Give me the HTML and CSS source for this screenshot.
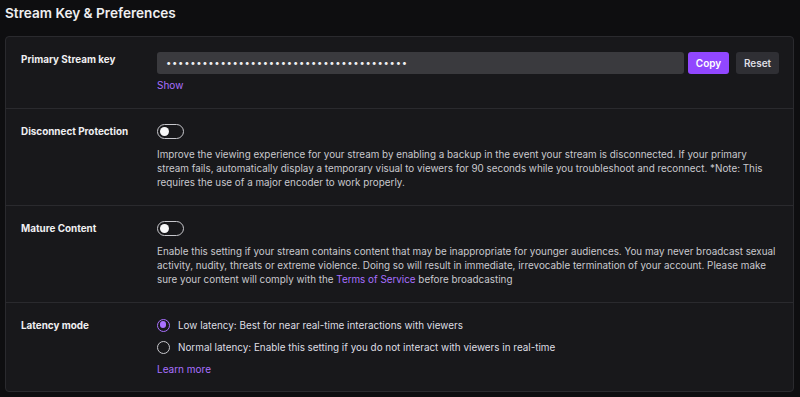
FILE: index.html
```html
<!DOCTYPE html>
<html>
<head>
<meta charset="utf-8">
<link rel="stylesheet" href="styles.css">
</head>
<body>
<div class="page">
  <h1 class="title">Stream Key &amp; Preferences</h1>
  <div class="card">
    <div class="row row-key">
      <div class="label">Primary Stream key</div>
      <div class="content">
        <div class="key-line">
          <div class="key-input">••••••••••••••••••••••••••••••••••••••••</div>
          <button class="btn btn-primary">Copy</button>
          <button class="btn btn-secondary">Reset</button>
        </div>
        <a class="link show">Show</a>
      </div>
    </div>
    <div class="row">
      <div class="label">Disconnect Protection</div>
      <div class="content">
        <div class="toggle"><span class="knob"></span></div>
        <p class="desc">Improve the viewing experience for your stream by enabling a backup in the event your stream is disconnected. If your primary<br>stream fails, automatically display a temporary visual to viewers for 90 seconds while you troubleshoot and reconnect. *Note: This<br>requires the use of a major encoder to work properly.</p>
      </div>
    </div>
    <div class="row">
      <div class="label">Mature Content</div>
      <div class="content">
        <div class="toggle"><span class="knob"></span></div>
        <p class="desc">Enable this setting if your stream contains content that may be inappropriate for younger audiences. You may never broadcast sexual<br>activity, nudity, threats or extreme violence. Doing so will result in immediate, irrevocable termination of your account. Please make<br>sure your content will comply with the <span class="link">Terms of Service</span> before broadcasting</p>
      </div>
    </div>
    <div class="row row-latency">
      <div class="label">Latency mode</div>
      <div class="content">
        <div class="radio-row"><span class="radio checked"></span><span class="radio-text">Low latency: Best for near real-time interactions with viewers</span></div>
        <div class="radio-row"><span class="radio"></span><span class="radio-text">Normal latency: Enable this setting if you do not interact with viewers in real-time</span></div>
        <a class="link learn">Learn more</a>
      </div>
    </div>
  </div>
</div>
</body>
</html>
```

FILE: styles.css
```css
* { box-sizing: border-box; }
html, body { margin: 0; padding: 0; }
body {
  background: #0e0e10;
  font-family: Inter, "Noto Sans", sans-serif;
  color: #dedee3;
  width: 800px;
  height: 397px;
  overflow: hidden;
}
.page {
  padding: 3px 6px 0 5px;
}
.title {
  margin: 0 0 13px 0;
  font-size: 13.6px;
  font-weight: 600;
  line-height: 20px;
  color: #efeff1;
}
.card {
  background: #18181b;
  border: 1px solid #2a2a2e;
  border-radius: 4px;
}
.row {
  display: flex;
  padding: 15px 4px 16px 15px;
  border-top: 1px solid #2a2a2e;
}
.row:first-child { border-top: none; }
.row-key { padding-top: 15px; padding-bottom: 16px; padding-right: 12px; }
.row-latency { padding-top: 15px; padding-bottom: 15px; }
.label {
  width: 136px;
  flex: none;
  font-size: 9.9px;
  font-weight: 700;
  color: #efeff1;
  line-height: 14px;
}
.content {
  flex: 1;
  min-width: 0;
}
.key-line {
  display: flex;
  align-items: center;
  gap: 4px;
  padding-right: 2px;
}
.key-input {
  flex: 1;
  height: 22px;
  background: #3a3a3e;
  border-radius: 3px;
  padding: 0 9px;
  font-size: 9.5px;
  letter-spacing: 0.7px;
  line-height: 22px;
  color: #efeff1;
  white-space: nowrap;
  overflow: hidden;
}
.btn {
  height: 22px;
  border: none;
  border-radius: 3px;
  font-family: inherit;
  font-size: 10px;
  font-weight: 600;
  padding: 0;
  cursor: pointer;
}
.btn-primary {
  background: #9147ff;
  color: #ffffff;
  width: 41px;
  margin-right: 3px;
}
.btn-secondary {
  background: #2f2f34;
  color: #dedee3;
  width: 43px;
}
.link {
  color: #a970ff;
  text-decoration: none;
}
.show {
  display: block;
  font-size: 10px;
  line-height: 14px;
  margin-top: 4px;
}
.toggle {
  width: 27px;
  height: 15px;
  border: 1.5px solid #c8c8cd;
  border-radius: 8px;
  position: relative;
  margin-bottom: 8px;
}
.knob {
  position: absolute;
  left: 1.5px;
  top: 1.5px;
  width: 9px;
  height: 9px;
  border-radius: 50%;
  background: #f7f7f8;
}
.desc {
  margin: 0;
  font-size: 9.85px;
  line-height: 14px;
  color: #c9c9ce;
  white-space: nowrap;
}
.radio-row {
  display: flex;
  align-items: center;
  height: 14px;
  margin-bottom: 8px;
}
.radio {
  width: 13px;
  height: 13px;
  border: 1.5px solid #c8c8cd;
  border-radius: 50%;
  margin-right: 8px;
  flex: none;
  position: relative;
}
.radio.checked {
  border-color: #a970ff;
}
.radio.checked::after {
  content: "";
  position: absolute;
  left: 1.75px;
  top: 1.75px;
  width: 6.5px;
  height: 6.5px;
  border-radius: 50%;
  background: #a970ff;
}
.radio-text {
  font-size: 9.9px;
  color: #dedee3;
}
.learn {
  display: block;
  font-size: 10px;
  line-height: 14px;
}
```
